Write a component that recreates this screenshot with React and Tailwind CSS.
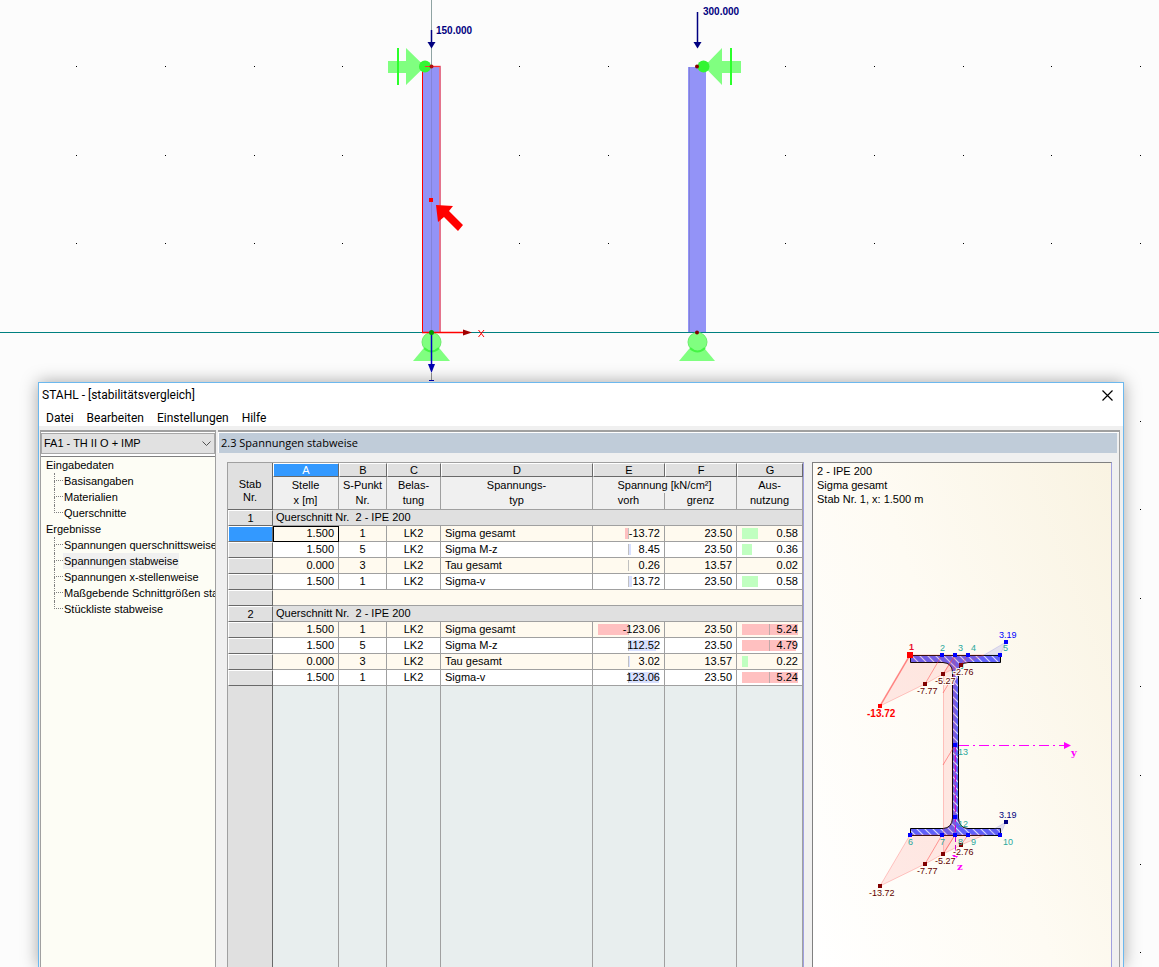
import React, { useState } from 'react';


const menuItems = ['Datei', 'Bearbeiten', 'Einstellungen', 'Hilfe'];

const tree = [
    { title: 'Eingabedaten', items: ['Basisangaben', 'Materialien', 'Querschnitte'] },
    {
        title: 'Ergebnisse',
        items: [
            'Spannungen querschnittsweise',
            'Spannungen stabweise',
            'Spannungen x-stellenweise',
            'Maßgebende Schnittgrößen stabweise',
            'Stückliste stabweise',
        ],
    },
];

const groups = [
    {
        nr: 1,
        title: 'Querschnitt Nr.  2 - IPE 200',
        rows: [
            { x: '1.500', punkt: 1, last: 'LK2', typ: 'Sigma gesamt', vorh: -13.72, grenz: '23.50', aus: 0.58 },
            { x: '1.500', punkt: 5, last: 'LK2', typ: 'Sigma M-z', vorh: 8.45, grenz: '23.50', aus: 0.36 },
            { x: '0.000', punkt: 3, last: 'LK2', typ: 'Tau gesamt', vorh: 0.26, grenz: '13.57', aus: 0.02 },
            { x: '1.500', punkt: 1, last: 'LK2', typ: 'Sigma-v', vorh: 13.72, grenz: '23.50', aus: 0.58 },
        ],
    },
    {
        nr: 2,
        title: 'Querschnitt Nr.  2 - IPE 200',
        rows: [
            { x: '1.500', punkt: 1, last: 'LK2', typ: 'Sigma gesamt', vorh: -123.06, grenz: '23.50', aus: 5.24 },
            { x: '1.500', punkt: 5, last: 'LK2', typ: 'Sigma M-z', vorh: 112.52, grenz: '23.50', aus: 4.79 },
            { x: '0.000', punkt: 3, last: 'LK2', typ: 'Tau gesamt', vorh: 3.02, grenz: '13.57', aus: 0.22 },
            { x: '1.500', punkt: 1, last: 'LK2', typ: 'Sigma-v', vorh: 123.06, grenz: '23.50', aus: 5.24 },
        ],
    },
];

const gridX = [76, 165, 254, 342, 431, 519, 608, 697, 785, 874, 963, 1051, 1140];
const gridY = [66, 155, 243, 332, 421, 509, 598, 686, 775, 864, 952];

const Scene = () => (
    <svg className="absolute inset-0 w-full h-full" aria-hidden="true">
        {gridX.map((x) => gridY.map((y) => <rect key={`${x}-${y}`} x={x} y={y} width="1" height="1" fill="#000" />))}
        <rect x="0" y="332" width="100%" height="1" fill="#008080" />
        <rect x="431" y="0" width="1" height="67" fill="#8fa3a3" />

        {/* left column */}
        <rect x="422" y="66" width="19" height="267" fill="#9393f7" />
        <rect x="431" y="67" width="1" height="265" fill="#8484d8" />
        <path d="M422.5 332V66.5" stroke="#f00" />
        <path d="M422 66.5H440V332" stroke="#ff6a6a" fill="none" strokeWidth="1.5" />
        <path d="M388 61H406V48L425 66.500L406 85V73H388Z" fill="#80ff80" />
        <rect x="397" y="48" width="2" height="37" fill="#2bff2b" />
        <circle cx="425" cy="66.500" r="6" fill="#33f533" />
        <path d="M425 66.500H440" stroke="#ff3030" />
        <circle cx="431.500" cy="66.500" r="2" fill="#b01010" />
        <path d="M431.500 30V43" stroke="#000080" strokeWidth="1.5" />
        <path d="M427.500 42H435.500L431.500 48.500Z" fill="#000080" />
        <text x="436" y="34" className="fill-[#000080] text-[10px] font-bold">150.000</text>
        <rect x="429" y="198" width="4" height="4" fill="#f00" />
        <path d="M436 205L453 206L449 211L463 225L458 231L444 217L438 222Z" fill="#f00" />

        <path d="M423 349H440L450 361H413Z" fill="#80ff80" />
        <circle cx="431.500" cy="342" r="9.500" fill="#80ff80" stroke="#6ceb6c" />
        <path d="M424 348Q431.500 355 439 348" stroke="#44f544" strokeWidth="2" fill="none" />
        <path d="M422 332.500H463" stroke="#f00" strokeWidth="1.5" />
        <path d="M463 329.500L472 332.500L463 335.500Z" fill="#a00000" />
        <path d="M478.500 330L484 337M484 330L478.500 337" stroke="#f00" />
        <path d="M431.500 333V365" stroke="#0000c0" strokeWidth="1.5" />
        <path d="M428 364H435L431.500 373Z" fill="#0000b0" />
        <path d="M431.500 373V381" stroke="#909090" />
        <path d="M429 380.500H434" stroke="#0000c0" />
        <circle cx="431.500" cy="332.500" r="2.500" fill="#009a00" />

        {/* right column */}
        <rect x="688" y="67" width="18" height="265" fill="#9393f7" />
        <path d="M689.500 67V332" stroke="#8080d8" />
        <path d="M741 61H722V48L704 66.500L722 85V73H741Z" fill="#80ff80" />
        <rect x="730" y="48" width="2" height="37" fill="#2bff2b" />
        <circle cx="703.500" cy="66.500" r="6" fill="#33f533" />
        <circle cx="697" cy="66.500" r="2" fill="#800000" />
        <path d="M697.500 12V43" stroke="#000080" strokeWidth="1.5" />
        <path d="M693.500 42H701.500L697.500 48.500Z" fill="#000080" />
        <text x="703" y="15" className="fill-[#000080] text-[10px] font-bold">300.000</text>
        <path d="M689 349H705L715 361H679Z" fill="#80ff80" />
        <circle cx="697.500" cy="342" r="9.500" fill="#80ff80" stroke="#6ceb6c" />
        <path d="M690 348Q697.500 355 705 348" stroke="#44f544" strokeWidth="2" fill="none" />
        <circle cx="697" cy="332.500" r="2" fill="#800000" />
    </svg>
);

const Marker = ({ x, y, color, size = 4 }) => (
    <rect x={x - size / 2} y={y - size / 2} width={size} height={size} fill={color} />
);

const SectionDrawing = () => (
    <svg width="298" height="400" viewBox="813 508 298 400" className="block shrink-0" role="img" aria-label="IPE 200">
        <defs>
            <pattern id="hatch" width="8" height="8" patternUnits="userSpaceOnUse">
                <rect width="8" height="8" fill="#6060f8" />
                <path d="M-2 -2L10 10M-2 6L2 10M6 -2L10 2" stroke="#d8d8ff" strokeWidth="1.2" />
            </pattern>
        </defs>

        <path
            d="M910.500 655.500H1000.500V662.500H968Q959 663 958.500 672V818Q959 828 968 828.500H1000.500V835.500H910.500V828.500H943Q952 828 952.500 818V672Q952 663 943 662.500H910.500Z"
            fill="url(#hatch)"
            stroke="#000"
        />

        <g fill="#ff4040" fillOpacity="0.11" stroke="#ff5050" strokeOpacity="0.3">
            <path d="M910 655L880 706L925 684L943 674L961 665L984 655Z" />
            <path d="M943.500 674L955 655V835L943.500 854Z" />
            <path d="M910 835L880 886L925 864L943 854L961 845L984 835Z" />
        </g>
        <g stroke="#ff4040" strokeOpacity="0.5" fill="none">
            <path d="M910 655L880 706" strokeWidth="1.5" />
            <path d="M942 655L925 684M955 655L943 674M968 655L961 665M955 673L943 693" />
            <path d="M955 745L943 765M942 835L925 864M955 835L943 854M968 835L961 845" />
        </g>
        <g fill="#6060e0" fillOpacity="0.15" stroke="#6060e0" strokeOpacity="0.2">
            <path d="M984 655L1006 642L1000 655Z" />
            <path d="M984 835L1006 822L1000 835Z" />
        </g>

        <path d="M959 745.500H1064" stroke="#f0f" strokeDasharray="10 4 2 4" />
        <path d="M1064 742L1071 745.500L1064 749Z" fill="#f0f" />
        <path d="M955.500 745V853" stroke="#d000d0" strokeDasharray="7 3" />
        <path d="M952 855H959L955.500 859Z" fill="#f0f" />

        {[[942, 655], [955, 655], [968, 655], [1000, 655], [1006, 642], [955, 745], [955, 817], [910, 835], [942, 835], [955, 835], [968, 835], [1000, 835]].map(
            ([x, y]) => <Marker key={`${x}-${y}`} x={x} y={y} color="#0000ff" />
        )}
        <text x="960" y="669" className="text-[9px] fill-[#2aa89c]">1</text>
        {[[925, 684], [943, 674], [961, 665], [880, 886], [925, 864], [943, 854], [961, 845]].map(
            ([x, y]) => <Marker key={`${x}-${y}`} x={x} y={y} color="#800000" />
        )}
        <Marker x={1006} y={822} color="#000080" />
        <Marker x={880} y={706} color="#ff0000" />
        <Marker x={910} y={655} color="#ff0000" size={6} />

        <g className="text-[9px] fill-[#2aa89c]">
            <text x="940" y="651">2</text>
            <text x="958" y="651">3</text>
            <text x="971" y="651">4</text>
            <text x="1003" y="651">5</text>
            <text x="958" y="755">13</text>
            <text x="958" y="827">12</text>
            <text x="908" y="845">6</text>
            <text x="940" y="845">7</text>
            <text x="958" y="845">8</text>
            <text x="971" y="845">9</text>
            <text x="1003" y="845">10</text>
        </g>
        <g className="text-[9px] fill-[#600000]" stroke="#fffdf5" strokeWidth="2" paintOrder="stroke">
            <text x="917" y="694">-7.77</text>
            <text x="935" y="684">-5.27</text>
            <text x="953" y="675">-2.76</text>
            <text x="869" y="896">-13.72</text>
            <text x="917" y="874">-7.77</text>
            <text x="935" y="864">-5.27</text>
            <text x="953" y="855">-2.76</text>
        </g>
        <text x="999" y="638" className="text-[9px] fill-[#0000ff]">3.19</text>
        <text x="999" y="818" className="text-[9px] fill-[#000080]">3.19</text>
        <text x="909" y="650" className="text-[9px] fill-[#e81030] font-bold">1</text>
        <text x="867" y="717" className="text-[10px] fill-[#ff0000] font-bold">-13.72</text>
        <g className="text-[10px] font-bold fill-[#ff00ff] font-['DejaVu_Serif',serif]">
            <text x="1071" y="756">y</text>
            <text x="957" y="870">z</text>
        </g>
    </svg>
);

const Sidebar = ({ active, onSelect }) => (
    <aside className="w-[176px] shrink-0 flex flex-col border-t-2 border-x border-[#a0a0a0] bg-white pt-px">
        <div className="relative">
            <select
                aria-label="Bemessungsfall"
                className="block w-full h-[21px] appearance-none border border-[#a8a8a8] bg-[#e1e1e1] pl-[2px] pr-5 text-[11px]"
            >
                <option>FA1 - TH II O + IMP</option>
            </select>
            <svg className="absolute right-1 top-2 pointer-events-none" width="9" height="6" aria-hidden="true">
                <path d="M0.5 0.5L4.500 4.500L8.500 0.5" fill="none" stroke="#505050" />
            </svg>
        </div>
        <nav className="mt-[2px] flex-1 border-t border-[#808080] bg-[#fdfdf5] text-[11px] leading-4 whitespace-nowrap overflow-hidden">
            {tree.map((group) => (
                <div key={group.title}>
                    <p className="pl-[5px]">{group.title}</p>
                    <ul className="pl-[13px]">
                        {group.items.map((item, i) => (
                            <li key={item} className="flex h-4">
                                <span className="w-[9px] shrink-0 flex flex-col">
                                    <span className="h-2 border-l border-b border-dotted border-[#808080]" />
                                    {i < group.items.length - 1 && (
                                        <span className="h-2 border-l border-dotted border-[#808080]" />
                                    )}
                                </span>
                                <button
                                    type="button"
                                    onClick={() => onSelect(item)}
                                    className={item === active ? 'h-4 px-px bg-[#f0f0f0]' : 'h-4 px-px'}
                                >
                                    {item}
                                </button>
                            </li>
                        ))}
                    </ul>
                </div>
            ))}
        </nav>
    </aside>
);

const StubCell = ({ children, selected }) => (
    <th
        scope="row"
        className={`h-4 p-0 font-normal border-t border-l border-r border-b border-t-white border-l-white border-r-[#696969] border-b-[#696969] ${
            selected ? 'bg-[#3399ff]' : 'bg-[#e0e0e0]'
        }`}
    >
        {children}
    </th>
);

const StressCell = ({ value }) => {
    const width = Math.round((Math.abs(value) / 123.06) * 30);
    return (
        <td className="relative isolate border-r border-b border-[#a0a0a0] pr-1 text-right">
            {value < 0 ? (
                <span className="absolute -z-10 right-9 top-[2px] h-[11px] bg-[#ffc0c0]" style={{ width }} />
            ) : (
                <span className="absolute -z-10 left-9 top-[2px] h-[11px] bg-[#d8e0ff]" style={{ width }} />
            )}
            <span className="absolute -z-10 left-[35px] top-[2px] h-[11px] w-px bg-[#c0c0c0]" />
            {value.toFixed(2)}
        </td>
    );
};

const UsageCell = ({ value }) => {
    // up to 1.0 uses the left half of the bar, everything above the full scale
    const width = value <= 1 ? Math.round(value * 28) : Math.round(28 + (value / 5.24) * 28);
    return (
        <td className="relative isolate border-r border-b border-[#a0a0a0] pr-1 text-right">
            {value > 0.1 && (
                <span
                    className={`absolute -z-10 left-[5px] top-[2px] h-[11px] ${value > 1 ? 'bg-[#ffc0c0]' : 'bg-[#c0ffc0]'}`}
                    style={{ width }}
                />
            )}
            {value > 1 && <span className="absolute -z-10 left-8 top-[2px] h-[11px] w-px bg-[#c0a8a8]" />}
            {value.toFixed(2)}
        </td>
    );
};

const letterClass = 'h-[14px] p-0 font-normal border-t border-l border-r border-b border-t-white border-l-white border-r-[#696969] border-b-[#696969]';
const headClass = 'p-0 pb-px font-normal leading-[15px] border-r border-b border-[#a0a0a0] bg-[#f0f0f0]';
const cell = 'border-r border-b border-[#a0a0a0]';

const StressTable = () => (
    <div className="w-[577px] shrink-0 flex flex-col border-t border-l border-r border-[#a0a0a0] border-r-[#a0a0e0] text-[11px]">
        <table className="w-full table-fixed border-separate border-spacing-0 leading-[15px]">
            <colgroup>
                <col className="w-[45px]" />
                <col className="w-[66px]" />
                <col className="w-[48px]" />
                <col className="w-[54px]" />
                <col className="w-[152px]" />
                <col className="w-[72px]" />
                <col className="w-[72px]" />
                <col className="w-[66px]" />
            </colgroup>
            <thead>
                <tr className="leading-3">
                    <th rowSpan={3} className="p-0 pt-[10px] font-normal leading-[13px] bg-[#e0e0e0] border-r border-b border-[#696969]">
                        Stab<br />Nr.
                    </th>
                    {['A', 'B', 'C', 'D', 'E', 'F', 'G'].map((letter) => (
                        <th
                            key={letter}
                            className={`${letterClass} ${letter === 'A' ? 'bg-[#3399ff] text-white' : 'bg-[#e0e0e0]'}`}
                        >
                            {letter}
                        </th>
                    ))}
                </tr>
                <tr className="h-4">
                    <th rowSpan={2} className={headClass}>Stelle<br />x [m]</th>
                    <th rowSpan={2} className={headClass}>S-Punkt<br />Nr.</th>
                    <th rowSpan={2} className={headClass}>Belas-<br />tung</th>
                    <th rowSpan={2} className={headClass}>Spannungs-<br />typ</th>
                    <th colSpan={2} className="h-4 p-0 font-normal leading-[15px] bg-[#f0f0f0] border-r border-[#a0a0a0]">
                        Spannung [kN/cm²]
                    </th>
                    <th rowSpan={2} className={headClass}>Aus-<br />nutzung</th>
                </tr>
                <tr className="h-[17px]">
                    <th className={headClass}>vorh</th>
                    <th className={headClass}>grenz</th>
                </tr>
            </thead>
            <tbody>
                {groups.map((group, g) => (
                    <React.Fragment key={group.nr}>
                        {g > 0 && (
                            <tr className="h-4">
                                <StubCell />
                                <td colSpan={7} className={`${cell} bg-[#fffaef]`} />
                            </tr>
                        )}
                        <tr className="h-4">
                            <StubCell><span className="block h-[14px] leading-[14px]">{group.nr}</span></StubCell>
                            <td colSpan={7} className={`${cell} bg-[#e0e0e0] pl-[3px] whitespace-pre`}>{group.title}</td>
                        </tr>
                        {group.rows.map((row, i) => (
                            <tr key={i} className={i % 2 === 0 ? 'h-4 bg-[#fffaef]' : 'h-4 bg-white'}>
                                <StubCell selected={g === 0 && i === 0} />
                                <td className={`${cell} pr-1 text-right ${g === 0 && i === 0 ? 'outline outline-black -outline-offset-1' : ''}`}>
                                    {row.x}
                                </td>
                                <td className={`${cell} text-center`}>{row.punkt}</td>
                                <td className={`${cell} text-center`}>{row.last}</td>
                                <td className={`${cell} pl-1`}>{row.typ}</td>
                                <StressCell value={row.vorh} />
                                <td className={`${cell} pr-1 text-right`}>{row.grenz}</td>
                                <UsageCell value={row.aus} />
                            </tr>
                        ))}
                    </React.Fragment>
                ))}
            </tbody>
        </table>
        <div className="flex-1 grid grid-cols-[45px_66px_48px_54px_152px_72px_72px_66px] bg-[#e8eeee]">
            <span className="bg-[#e0e0e0] border-r border-[#696969]" />
            {[1, 2, 3, 4, 5, 6, 7].map((n) => (
                <span key={n} className="border-r border-[#a0a0a0]" />
            ))}
        </div>
    </div>
);

const App = () => {
    const [active, setActive] = useState('Spannungen stabweise');

    return (
        <div className="relative min-h-screen flex flex-col overflow-hidden bg-[#fcfcfc] pt-[382px] pl-[38px] pr-[35px] text-black font-['Liberation_Sans',Arial,sans-serif]">
            <Scene />
            <div className="relative flex-1 flex flex-col bg-[#f0f0f0] border-t border-x border-[#6cb8ee] shadow-[0_0_16px_rgba(0,0,0,0.35)]">
                <header className="bg-white text-[12px] font-['Roboto',sans-serif]">
                    <div className="flex items-center justify-between h-6 pl-[3px] pr-[10px]">
                        <h1>STAHL - [stabilitätsvergleich]</h1>
                        <button type="button" aria-label="Schließen">
                            <svg width="11" height="11" className="block">
                                <path d="M0.5 0.5L10.500 10.500M10.500 0.5L0.5 10.500" stroke="#000" strokeWidth="1.2" />
                            </svg>
                        </button>
                    </div>
                    <nav className="flex gap-[13px] h-[19px] items-center pt-[3px] pl-[7px]">
                        {menuItems.map((item) => (
                            <button key={item} type="button" className="leading-4">{item}</button>
                        ))}
                    </nav>
                </header>

                <div className="flex-1 flex gap-[2px] pt-1 pl-px pr-[3px]">
                    <Sidebar active={active} onSelect={setActive} />
                    <main className="flex-1 min-w-0 flex flex-col border-t-2 border-r border-[#a0a0a0]">
                        <div className="border-t border-l border-white pr-[2px]">
                            <h2 className="h-5 pl-[2px] leading-5 text-[11px] bg-[#c0ccd9] font-['Open_Sans',sans-serif]">
                                2.3 Spannungen stabweise
                            </h2>
                        </div>
                        <div className="flex-1 flex gap-2 pt-[9px] pl-[9px] pr-[7px]">
                            <StressTable />
                            <section className="flex-1 min-w-0 overflow-hidden border-t border-l border-r border-[#808080] border-r-[#a0a0e0] bg-linear-70 from-white via-[#fefbf3] to-[#f9f3e2]">
                                <div className="pl-1 pt-px h-[45px] text-[11px] leading-[14px]">
                                    <p>2 - IPE 200</p>
                                    <p>Sigma gesamt</p>
                                    <p>Stab Nr. 1, x: 1.500 m</p>
                                </div>
                                <SectionDrawing />
                            </section>
                        </div>
                    </main>
                </div>
            </div>
        </div>
    );
};


export default App;
